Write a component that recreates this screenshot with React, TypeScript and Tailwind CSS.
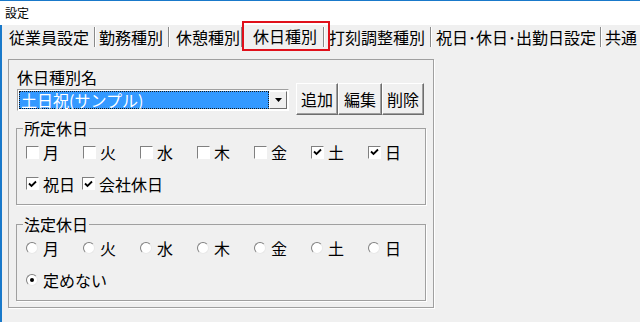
import React from "react";

const font = { fontFamily: '"Noto Sans CJK JP", "Noto Sans", sans-serif' };

const tabs = [
  { label: "従業員設定", pl: "pl-[7px]", pr: "pr-[5px]" },
  { label: "勤務種別", pl: "pl-[3px]", pr: "pr-[5px]" },
  { label: "休憩種別", pl: "pl-[6px]", pr: "pr-[1px]" },
];
const tabsAfter = [
  { label: "打刻調整種別", pl: "pl-[4px]", pr: "pr-[5px]" },
  { label: "祝日･休日･出勤日設定", pl: "pl-[4px]", pr: "pr-[4px]" },
  { label: "共通", pl: "pl-[3px]", pr: "pr-[0px]" },
];

const days = ["月", "火", "水", "木", "金", "土", "日"];

function Sep() {
  return <span className="h-[20px] w-[2px] shrink-0 border-l border-r border-l-[#8a8a8a] border-r-white" />;
}

function Check({ checked }: { checked?: boolean }) {
  return (
    <span className="flex h-[13px] w-[13px] shrink-0 items-center justify-center border border-t-[#808080] border-l-[#808080] border-b-white border-r-white bg-white">
      {checked && (
        <svg width="9" height="8" viewBox="0 0 9 8">
          <path d="M1 3.5 L3.5 6 L8 1.5" fill="none" stroke="#000" strokeWidth="1.8" />
        </svg>
      )}
    </span>
  );
}

function Radio({ checked }: { checked?: boolean }) {
  return (
    <span className="flex h-[12px] w-[12px] shrink-0 items-center justify-center rounded-full border border-t-[#808080] border-l-[#808080] border-b-[#e8e8e8] border-r-[#e8e8e8] bg-white">
      {checked && <span className="h-[4px] w-[4px] rounded-full bg-black" />}
    </span>
  );
}

function Btn({ label, w }: { label: string; w: string }) {
  return (
    <div
      className={`flex h-[32px] ${w} items-center justify-center border border-t-white border-l-white border-b-[#6e6e6e] border-r-[#6e6e6e] bg-[#f0f0f0] text-[16px] leading-none text-black shadow-[inset_-1px_-1px_0_#a0a0a0]`}
    >
      {label}
    </div>
  );
}

export default function App() {
  return (
    <div className="flex h-[322px] w-[640px] flex-col overflow-hidden bg-[#f0f0f0] text-black" style={font}>
      {/* title */}
      <div className="flex h-[25px] shrink-0 items-center border-t border-[#1979ca] bg-white pl-[5px] text-[12px]">
        設定
      </div>

      <div className="flex flex-1 flex-col border-l-2 border-[#1979ca]">
        {/* tab strip */}
        <div className="relative flex h-[24px] items-center whitespace-nowrap text-[16px] leading-none">
          {tabs.map((t) => (
            <React.Fragment key={t.label}>
              <span className={`${t.pl} ${t.pr}`}>{t.label}</span>
              <Sep />
            </React.Fragment>
          ))}
          <span className="relative pl-[10px] pr-[6px]">
            <span className="absolute left-[-1px] top-[-8px] h-[30px] w-[88px] border-2 border-[#e0101a]" />
            <span className="relative -top-[1px]">休日種別</span>
          </span>
          {tabsAfter.map((t) => (
            <React.Fragment key={t.label}>
              <Sep />
              <span className={`${t.pl} ${t.pr}`}>{t.label}</span>
            </React.Fragment>
          ))}
        </div>

        {/* panel */}
        <div className="ml-[6px] mt-[10px] flex h-[249px] w-[426px] flex-col border border-[#a0a0a0] shadow-[1px_1px_0_#ffffff]">
          <div className="flex items-start">
            <div className="flex flex-col pl-[8px] pt-[7px]">
              <div className="h-[20px] text-[16px] leading-[20px]">休日種別名</div>
              <div className="mt-[2px] flex h-[22px] w-[272px] border border-t-[#a0a0a0] border-l-[#a0a0a0] border-b-white border-r-white bg-white p-[1px]">
                <div className="flex flex-1 items-center border border-dotted border-[#1a1a1a] bg-[#3399ff] pl-[1px] text-[16px] leading-none text-white">
                  土日祝(サンプル)
                </div>
                <div className="flex w-[18px] items-center justify-center border border-t-white border-l-white border-b-[#6e6e6e] border-r-[#6e6e6e] bg-[#f0f0f0]">
                  <svg width="7" height="4" viewBox="0 0 7 4">
                    <path d="M0 0 H7 L3.5 4 Z" fill="#000" />
                  </svg>
                </div>
              </div>
            </div>
            <div className="ml-[7px] mt-[23px] flex">
              <Btn label="追加" w="w-[42px]" />
              <Btn label="編集" w="w-[44px]" />
              <Btn label="削除" w="w-[42px]" />
            </div>
          </div>

          <fieldset className="ml-[7px] mt-[5px] h-[85px] w-[408px] border border-[#a0a0a0] shadow-[1px_1px_0_#ffffff]">
            <legend className="ml-[6px] px-[1px] text-[16px] leading-[16px]">所定休日</legend>
            <div className="flex h-[31px] items-center pl-[9px] pt-[1px] text-[16px] leading-none">
              {days.map((d) => (
                <div key={d} className="flex w-[57px] items-center gap-[4px]">
                  <Check checked={d === "土" || d === "日"} />
                  <span>{d}</span>
                </div>
              ))}
            </div>
            <div className="flex h-[33px] items-center pl-[9px] text-[16px] leading-none">
              <div className="flex w-[56px] items-center gap-[4px]">
                <Check checked />
                <span>祝日</span>
              </div>
              <div className="flex items-center gap-[4px]">
                <Check checked />
                <span>会社休日</span>
              </div>
            </div>
          </fieldset>

          <fieldset className="ml-[7px] mt-[11px] h-[85px] w-[408px] border border-[#a0a0a0] shadow-[1px_1px_0_#ffffff]">
            <legend className="ml-[6px] px-[1px] text-[16px] leading-[16px]">法定休日</legend>
            <div className="flex h-[31px] items-center pl-[9px] pt-[1px] text-[16px] leading-none">
              {days.map((d) => (
                <div key={d} className="flex w-[57px] items-center gap-[5px]">
                  <Radio />
                  <span>{d}</span>
                </div>
              ))}
            </div>
            <div className="flex h-[33px] items-center pl-[9px] text-[16px] leading-none">
              <div className="flex items-center gap-[5px]">
                <Radio checked />
                <span>定めない</span>
              </div>
            </div>
          </fieldset>
        </div>
      </div>
    </div>
  );
}
